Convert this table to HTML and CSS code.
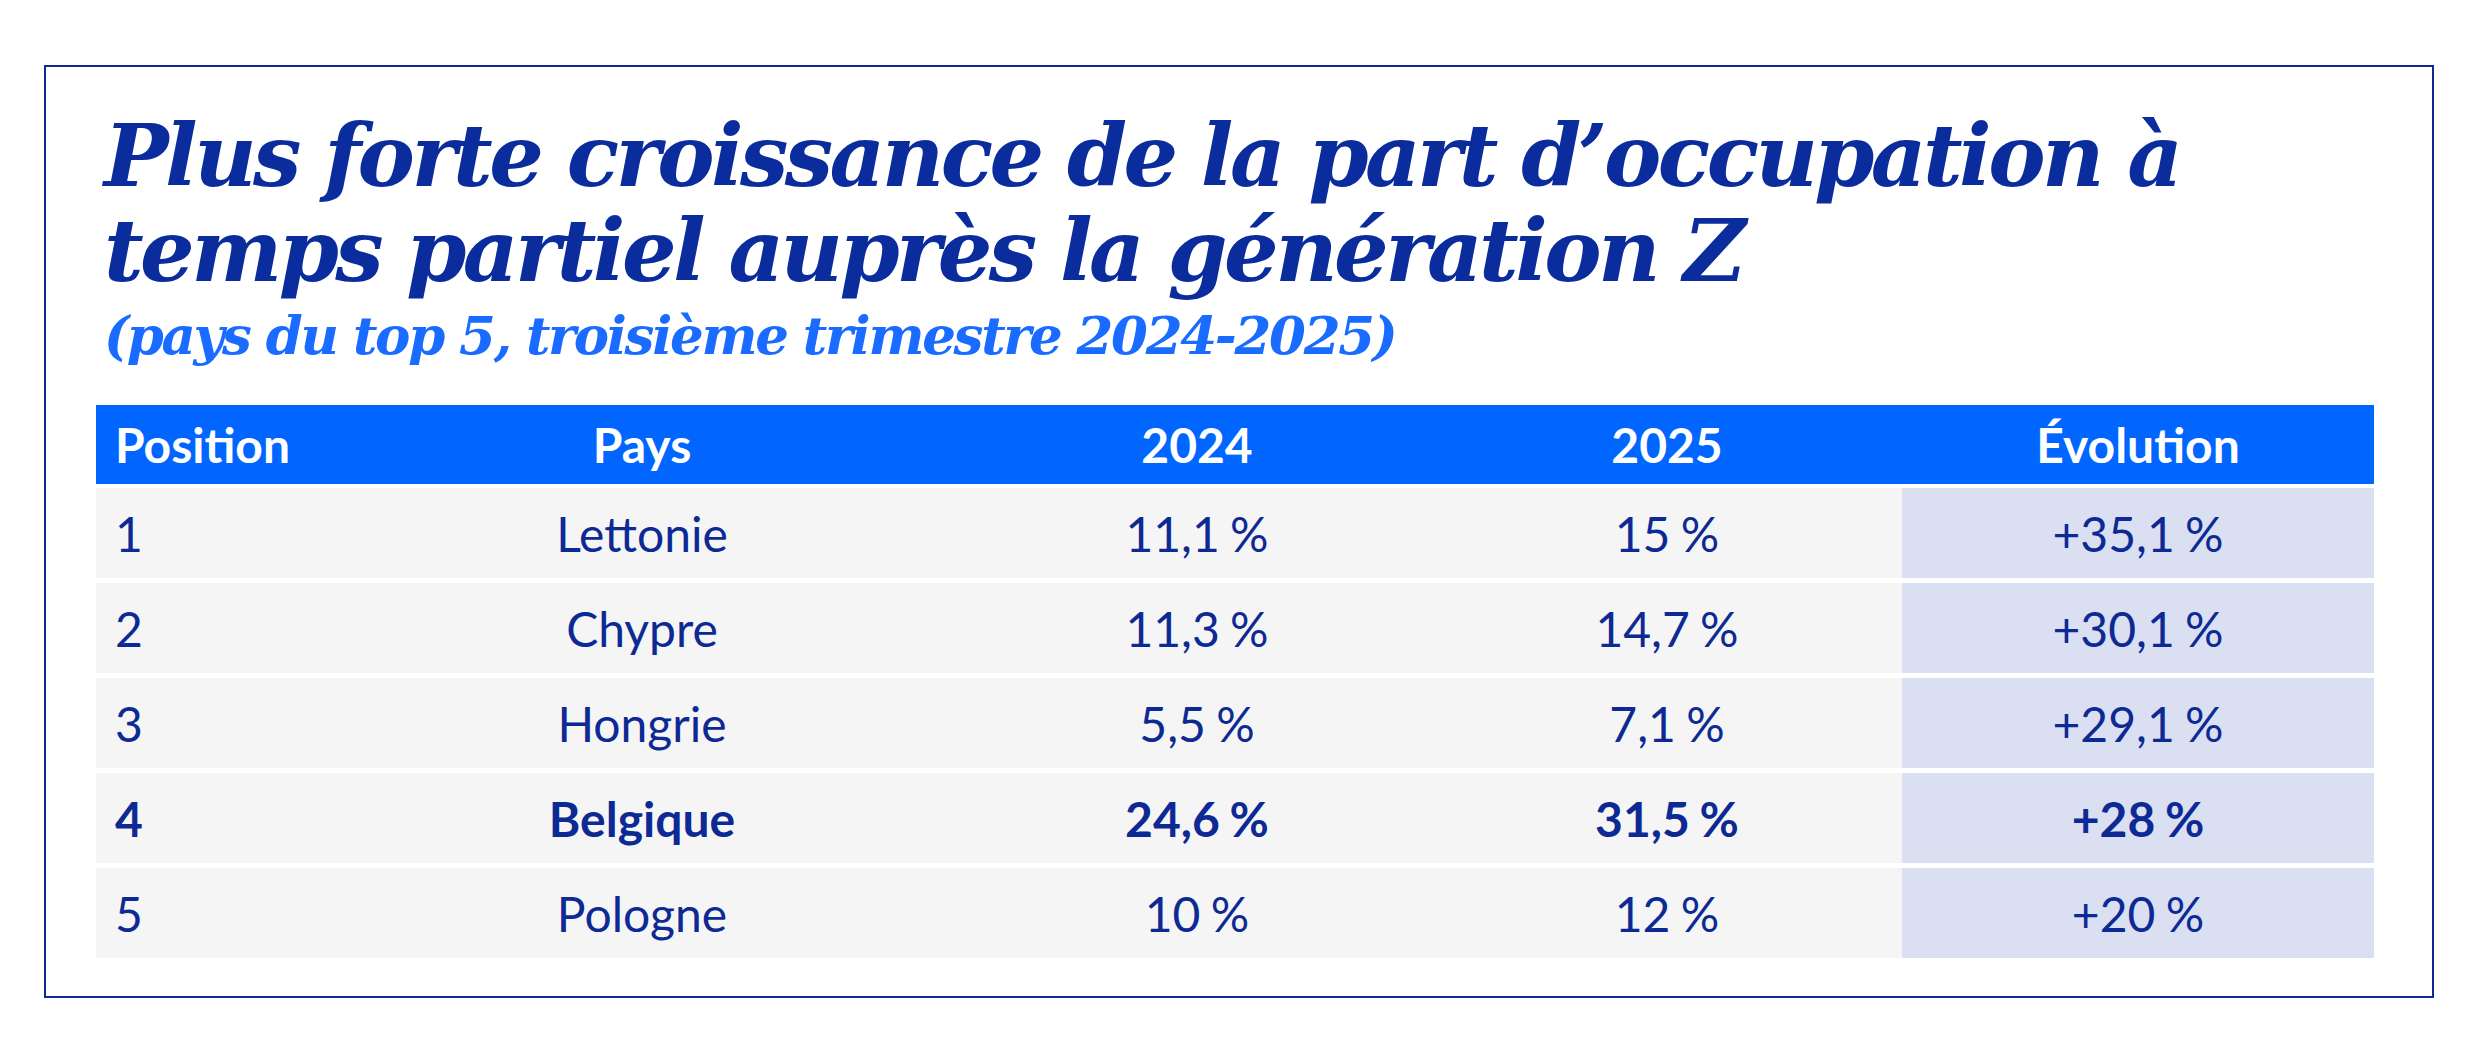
FILE: index.html
```html
<!DOCTYPE html>
<html lang="fr">
<head>
<meta charset="utf-8">
<title>Plus forte croissance de la part d’occupation à temps partiel</title>
<link rel="stylesheet" href="styles.css">
</head>
<body>
<div class="frame">
  <div class="heading">
    <h1 class="title">Plus forte croissance de la part d’occupation à<br>temps partiel auprès la génération Z</h1>
    <p class="subtitle">(pays du top 5, troisième trimestre 2024-2025)</p>
  </div>
  <div class="table">
    <div class="row head">
      <div class="cell first">Position</div>
      <div class="cell">Pays</div>
      <div class="cell">2024</div>
      <div class="cell">2025</div>
      <div class="cell">Évolution</div>
    </div>
    <div class="row">
      <div class="cell first">1</div>
      <div class="cell">Lettonie</div>
      <div class="cell">11,1&nbsp;%</div>
      <div class="cell">15&nbsp;%</div>
      <div class="cell evo">+35,1&nbsp;%</div>
    </div>
    <div class="row">
      <div class="cell first">2</div>
      <div class="cell">Chypre</div>
      <div class="cell">11,3&nbsp;%</div>
      <div class="cell">14,7&nbsp;%</div>
      <div class="cell evo">+30,1&nbsp;%</div>
    </div>
    <div class="row">
      <div class="cell first">3</div>
      <div class="cell">Hongrie</div>
      <div class="cell">5,5&nbsp;%</div>
      <div class="cell">7,1&nbsp;%</div>
      <div class="cell evo">+29,1&nbsp;%</div>
    </div>
    <div class="row strong">
      <div class="cell first">4</div>
      <div class="cell">Belgique</div>
      <div class="cell">24,6&nbsp;%</div>
      <div class="cell">31,5&nbsp;%</div>
      <div class="cell evo">+28&nbsp;%</div>
    </div>
    <div class="row">
      <div class="cell first">5</div>
      <div class="cell">Pologne</div>
      <div class="cell">10&nbsp;%</div>
      <div class="cell">12&nbsp;%</div>
      <div class="cell evo">+20&nbsp;%</div>
    </div>
  </div>
</div>
</body>
</html>
```

FILE: styles.css
```css
html, body {
  margin: 0;
  padding: 0;
  background: #ffffff;
}

.frame {
  box-sizing: border-box;
  width: 2390px;
  margin: 65px 0 0 44px;
  border: 2px solid #10288f;
  padding: 41px 58px 38px 50px;
}

.heading {
  padding-left: 8px;
}

.title {
  margin: 0;
  font-family: "DejaVu Serif", "Liberation Serif", serif;
  font-style: italic;
  font-weight: 700;
  font-size: 86px;
  line-height: 95px;
  letter-spacing: -3.6px;
  color: #0b2c9c;
}

.subtitle {
  margin: 7px 0 0 0;
  font-family: "DejaVu Serif", "Liberation Serif", serif;
  font-style: italic;
  font-weight: 700;
  font-size: 53px;
  line-height: 60px;
  letter-spacing: -2.3px;
  color: #1a6bff;
}

.table {
  margin-top: 40px;
  display: flex;
  flex-direction: column;
  gap: 5px;
  font-family: Lato, "Liberation Sans", sans-serif;
  font-size: 48px;
  word-spacing: -2px;
  color: #0d2a94;
}

.row {
  display: grid;
  grid-template-columns: 226px 640px 470px 470px 1fr;
  height: 90px;
  background: #f5f5f5;
}

.row.head {
  height: 79px;
  margin-bottom: -1px;
  background: #0066ff;
  color: #ffffff;
  font-weight: 700;
}

.row.strong {
  font-weight: 700;
}

.cell {
  display: flex;
  align-items: center;
  justify-content: center;
}

.cell.first {
  justify-content: flex-start;
  padding-left: 19px;
}

.cell.evo {
  background: #dadff2;
}
```
